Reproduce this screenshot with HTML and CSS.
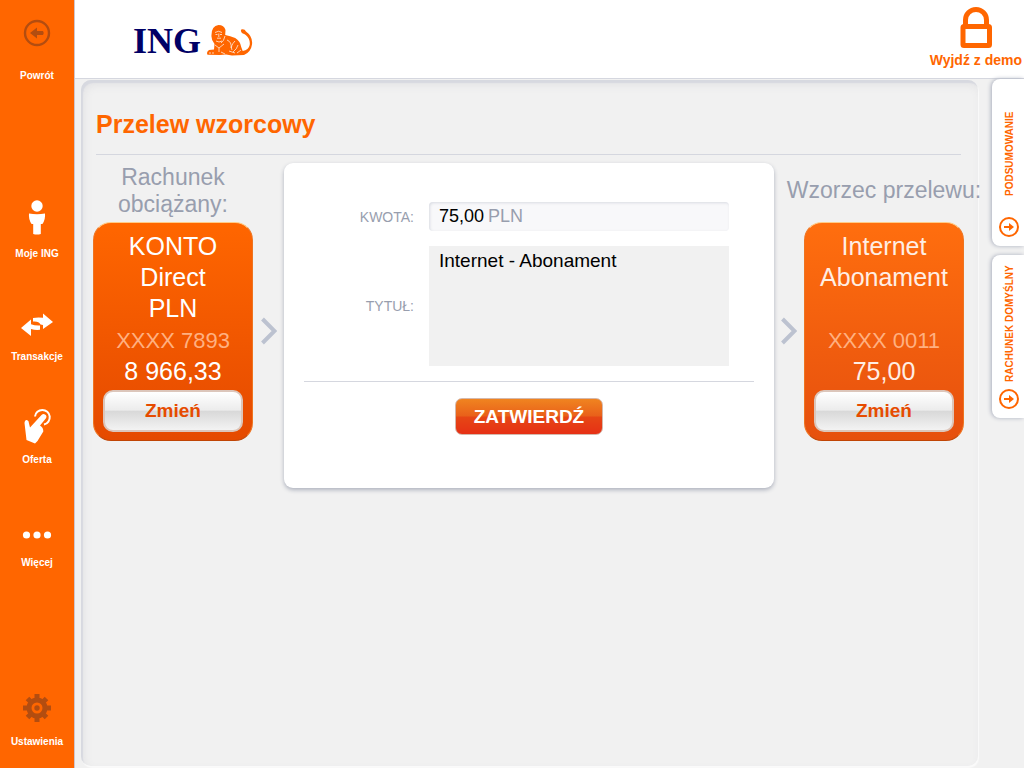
FILE: index.html
```html
<!DOCTYPE html>
<html lang="pl">
<head>
	<meta charset="UTF-8">
	<meta name="viewport" content="width=device-width, initial-scale=1.0">
	<title>Przelew wzorcowy</title>
	<link rel="stylesheet" href="styles.css">
</head>
<body>
	<!-- menu boczne -->
	<nav class="sidebar">
		<a href="#" class="item back">
			<svg class="dark" viewBox="0 0 40 52"><circle cx="20" cy="15" r="12" fill="none" stroke="currentColor" stroke-width="2.4"/><path d="M13 15l7-5.500v3.500h6q1.500 2 0 4h-6v3.500z"/></svg>
			<span>Powrót</span>
		</a>
		<a href="#" class="item">
			<svg viewBox="0 0 40 52"><circle cx="20" cy="10" r="5.700"/><path d="M12 17.500q8 1.500 16 0 .6 6-2.600 10.500h-1.600V38q-3.800 1-7.600 0V28h-1.600Q11.400 23.500 12 17.500z"/></svg>
			<span>Moje ING</span>
		</a>
		<a href="#" class="item">
			<svg viewBox="0 0 40 52"><path d="M4 29l10-8.500v4.700q4 1.600 9 1.300v4.300q-5 .5-9-.8v7z"/><path d="M36 23L26 14.500v4.300q-5-.8-10 .2v3.500q6-.5 7.500 3l2.500.5v4z"/></svg>
			<span>Transakcje</span>
		</a>
		<a href="#" class="item">
			<svg viewBox="0 0 40 52"><path d="M18 14.500a7.400 7.400 0 1 1 9 8" fill="none" stroke="currentColor" stroke-width="2"/><path d="M28 12.500q2.500 1.500.8 4L23 23.500q3.500 2 3.300 6L20.500 39 18 41.500l-8.500-3.500L7.500 21q.3-3.300 2.500-3 2 .5 2 3.500l1 4L24.500 13q1.800-1.500 3.500-.5z"/></svg>
			<span>Oferta</span>
		</a>
		<a href="#" class="item">
			<svg viewBox="0 0 40 52"><circle cx="9.500" cy="30" r="3.600"/><circle cx="20" cy="30" r="3.600"/><circle cx="30.500" cy="30" r="3.600"/></svg>
			<span>Więcej</span>
		</a>
		<a href="#" class="item settings">
			<svg class="dark" viewBox="0 0 40 52"><g fill="none" stroke="currentColor"><circle cx="20" cy="24" r="8" stroke-width="5"/><path d="M20 10v28M6 24h28M10.500 14.500l19 19M29.500 14.500l-19 19" stroke-width="5"/></g><circle cx="20" cy="24" r="5.500" class="hole"/><circle cx="20" cy="24" r="2.700"/></svg>
			<span>Ustawienia</span>
		</a>
	</nav>

	<div class="page">
		<header class="top">
			<a href="#" class="logo">
				<span>ING</span>
				<svg viewBox="0 0 46 32">
					<path d="M11.500 0Q17 0 18.500 5l-.3 5q5 1 10 3 5 3 6 9l1.500 4q6-1 7-6 .8-6-4-10-1.500-1.500-3-1.500-2.500-1.500-1.500-4 3.500-.8 4.800 2 7 5 6 13-1 7.500-8 10.500l-12 .5-6-1-6 .5-12.500-.3Q-1 27 2 25l5-.5.500-5.500Q4 15 4.500 10 4.500 1 11.500 0z"/>
					<g class="lines"><path d="M8 7.500q3.500-2.500 7 0M8.500 9.500h2M13 9.500h2M11.800 8.500V12M10 13.200h4M9 16q3 2 6 0M18 11q-1 5-4 7M8 20l4 3 5-4M12 23v4M20 15q5 2 4 8M28 16q-5 5-3 9M31 20q-1 4-5 7M3 27v2M6 27v2M14 27l4 2M22 26l6 2M34 25l-4 3"/></g>
				</svg>
			</a>
			<a href="#" class="logout">
				<svg viewBox="0 0 34 44"><path d="M6.500 20V14a10.500 10.500 0 0 1 21 0v6" fill="none" stroke="currentColor" stroke-width="5"/><rect x="4" y="20.500" width="26.500" height="19" rx="1" fill="none" stroke="currentColor" stroke-width="5"/></svg>
				<span>Wyjdź z demo</span>
			</a>
		</header>

		<div class="content">
			<main class="panel">
				<h1>Przelew wzorcowy</h1>
				<div class="transfer">
					<section class="side">
						<h2>Rachunek<br>obciążany:</h2>
						<div class="card">
							<p class="name">KONTO<br>Direct<br>PLN</p>
							<p class="number">XXXX 7893</p>
							<p class="amount">8 966,33</p>
							<button type="button" class="change">Zmień</button>
						</div>
					</section>
					<svg class="arrow" viewBox="0 0 16 28"><path d="M1.500 2l12 12-12 12"/></svg>
					<form class="form">
						<div class="row">
							<label for="kwota">KWOTA:</label>
							<div class="field">
								<input type="text" id="kwota" value="75,00">
								<span>PLN</span>
							</div>
						</div>
						<div class="row">
							<label for="tytul">TYTUŁ:</label>
							<textarea id="tytul">Internet - Abonament</textarea>
						</div>
						<div class="actions">
							<button type="button" class="submit">ZATWIERDŹ</button>
						</div>
					</form>
					<svg class="arrow" viewBox="0 0 16 28"><path d="M1.500 2l12 12-12 12"/></svg>
					<section class="side">
						<h2>Wzorzec przelewu:</h2>
						<div class="card light">
							<p class="name">Internet<br>Abonament</p>
							<p class="number">XXXX 0011</p>
							<p class="amount">75,00</p>
							<button type="button" class="change">Zmień</button>
						</div>
					</section>
				</div>
			</main>

			<!-- zakładki po prawej -->
			<aside class="tabs">
				<button type="button" class="tab">
					<svg viewBox="0 0 22 22"><circle cx="11" cy="11" r="9"/><path class="head" d="M16 11l-5-4v3H6v2h5v3z"/></svg>
					<span>PODSUMOWANIE</span>
				</button>
				<button type="button" class="tab">
					<svg viewBox="0 0 22 22"><circle cx="11" cy="11" r="9"/><path class="head" d="M16 11l-5-4v3H6v2h5v3z"/></svg>
					<span>RACHUNEK DOMYŚLNY</span>
				</button>
			</aside>
		</div>
	</div>
</body>
</html>
```
FILE: styles.css
```css
*{
	box-sizing: border-box;
	margin: 0;
	padding: 0;
}
body{
	display: flex;
	min-height: 100vh;
	background: #f1f1f1;
	font-family: "Liberation Sans", Arial, sans-serif;
}
a{
	text-decoration: none;
}
button{
	font-family: inherit;
	cursor: pointer;
}

/* menu boczne */
.sidebar{
	flex: none;
	display: flex;
	flex-direction: column;
	width: 75px;
	background: #ff6600;
	border-right: 1px solid #cfc5cd;
}
.item{
	display: flex;
	flex-direction: column;
	align-items: center;
	height: 103px;
	color: #fff;
	font-size: 10px;
	font-weight: bold;
	line-height: 12px;
}
.item svg{
	width: 40px;
	height: 52px;
	fill: currentColor;
}
.item .dark{
	color: #b34d10;
}
.item .hole{
	fill: #ff6600;
}
.back{
	height: 196px;
	padding-top: 18px;
}
.settings{
	height: 84px;
	margin-top: auto;
}

/* naglowek */
.page{
	flex: 1;
	display: flex;
	flex-direction: column;
	min-width: 0;
}
.top{
	display: flex;
	justify-content: space-between;
	height: 79px;
	padding-left: 58px;
	background: #fff;
	border-bottom: 1px solid #d5d7df;
}
.logo{
	display: flex;
	align-items: center;
	gap: 6px;
	padding-top: 4px;
	color: #000066;
	font-family: "Liberation Serif", serif;
	font-size: 36px;
	font-weight: bold;
}
.logo svg{
	width: 46px;
	height: 32px;
	fill: #ff6600;
}
.logo .lines{
	fill: none;
	stroke: #fff;
	stroke-width: 0.7;
}
.logout{
	display: flex;
	flex-direction: column;
	align-items: center;
	padding: 6px 2px 0 0;
	color: #ff6600;
	font-size: 14px;
	font-weight: bold;
	line-height: 20px;
}
.logout svg{
	width: 34px;
	height: 44px;
}

/* panel glowny */
.content{
	flex: 1;
	display: flex;
}
.panel{
	flex: 1;
	min-width: 0;
	margin: 1px 14px 2px 6px;
	padding: 26px 14px 0 12px;
	border-radius: 10px;
	box-shadow: inset 2px 3px 1px #d7d9e0, inset 3px 5px 8px #e2e2e4, 1px 2px 1px #fafafa;
}
h1{
	margin: 0 3px 8px 3px;
	padding-bottom: 12px;
	border-bottom: 1px solid #d5d7df;
	color: #ff6600;
	font-size: 25px;
	line-height: 36px;
}
.transfer{
	display: grid;
	grid-template-columns: 160px 31px 1fr 30px 160px;
}
.side{
	display: flex;
	flex-direction: column;
	height: 278px;
}
.side h2{
	display: flex;
	flex: 1;
	flex-direction: column;
	align-items: center;
	justify-content: center;
	padding-bottom: 4px;
	color: #989eae;
	font-size: 23px;
	font-weight: normal;
	line-height: 27px;
	text-align: center;
	white-space: nowrap;
}
.card{
	display: flex;
	flex-direction: column;
	height: 219px;
	padding: 8px 9px;
	border: 1px solid #ee7420;
	border-top-color: #ffcc88;
	border-bottom-color: #c04505;
	border-radius: 18px;
	background: linear-gradient(#ff6600, #e54a00);
	color: #fff;
	font-size: 25px;
	line-height: 31px;
	text-align: center;
}
.light{
	background: linear-gradient(#ff6e0e, #e6500e);
	color: #ffeee4;
}
.name{
	height: 93px;
}
.number{
	height: 34px;
	color: #ffb080;
	font-size: 22px;
	line-height: 34px;
}
.amount{
	height: 32px;
	line-height: 26px;
}
.change{
	height: 42px;
	border: 2px solid #dcc6bb;
	border-radius: 10px;
	background: linear-gradient(#fff, #ececec 48%, #d8d8d8 50%, #f3f3f3);
	color: #e64b00;
	font-size: 19px;
	font-weight: bold;
}
.arrow{
	width: 16px;
	height: 28px;
	margin-top: 154px;
	justify-self: center;
	fill: none;
	stroke: #bcc2d0;
	stroke-width: 4;
}

/* formularz */
.form{
	height: 325px;
	padding: 39px 20px 0;
	border-radius: 9px;
	background: #fff;
	box-shadow: 0 2px 4px #adb1bd;
}
.row{
	display: grid;
	grid-template-columns: 110px 300px;
	gap: 15px;
	align-items: center;
	margin-bottom: 15px;
}
.row label{
	color: #989eae;
	font-size: 14px;
	text-align: right;
}
.field{
	display: flex;
	align-items: center;
	gap: 4px;
	height: 29px;
	padding: 0 10px;
	border-radius: 4px;
	background: #f8f8fa;
	box-shadow: inset 1px 1px 3px #d9dbe2;
	color: #989eae;
	font-size: 18px;
}
.field input{
	width: 45px;
	border: 0;
	background: none;
	color: #000;
	font-family: inherit;
	font-size: 18px;
}
textarea{
	height: 120px;
	padding: 4px 10px;
	border: 0;
	background: #f1f1f1;
	color: #000;
	font-family: inherit;
	font-size: 19px;
	line-height: 22px;
	resize: none;
}
.actions{
	padding-top: 16px;
	border-top: 1px solid #d5d7df;
	text-align: center;
}
.submit{
	width: 148px;
	height: 37px;
	border: 1px solid #d4b8ac;
	border-radius: 7px;
	background: linear-gradient(#f08420, #e9601a 49%, #e64715 51%, #e63015);
	color: #fff;
	font-size: 19px;
	font-weight: bold;
}

/* zakladki */
.tabs{
	flex: none;
	display: flex;
	flex-direction: column;
	gap: 9px;
	width: 32px;
}
.tab{
	display: flex;
	align-items: center;
	justify-content: flex-start;
	gap: 20px;
	height: 167px;
	padding: 8px 3px 8px 0;
	writing-mode: vertical-rl;
	transform: rotate(180deg);
	border: 0;
	border-radius: 0 8px 8px 0;
	background: #fff;
	box-shadow: 1px 0 4px #a9aebd;
	color: #ff6600;
	font-size: 10px;
	font-weight: bold;
}
.tab + .tab{
	gap: 6px;
	height: 163px;
}
.tab svg{
	flex: none;
	width: 22px;
	height: 22px;
	transform: rotate(180deg);
}
.tab circle{
	fill: none;
	stroke: #ff6600;
	stroke-width: 2;
}
.tab .head{
	fill: #ff6600;
}
```
